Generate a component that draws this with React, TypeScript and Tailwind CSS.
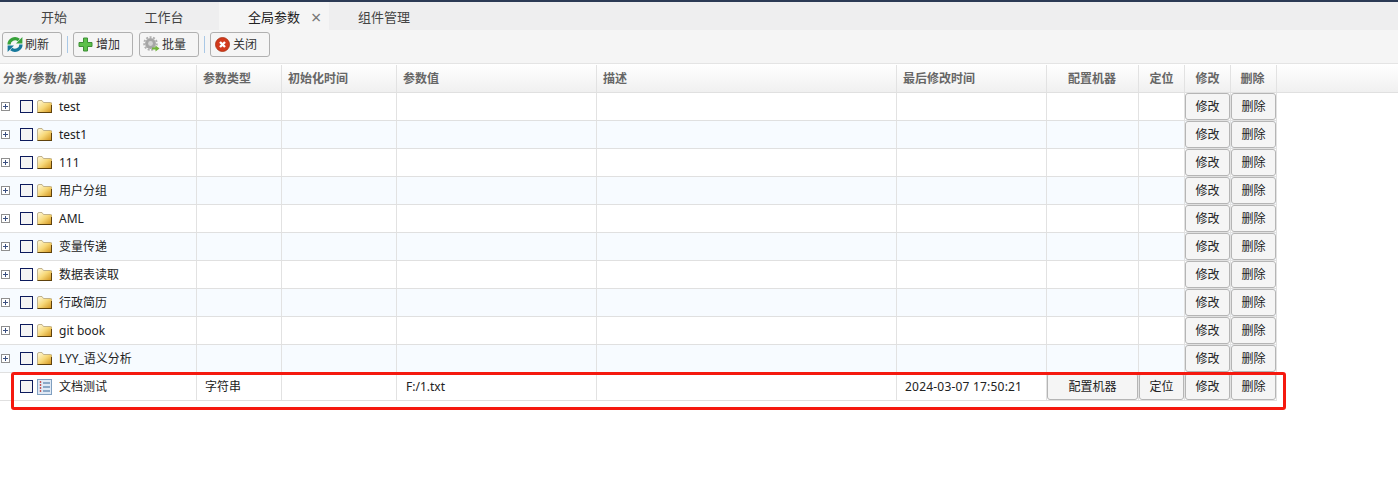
const font = { fontFamily: '"Noto Sans", "Noto Sans CJK SC", sans-serif' };

// column widths include the 1px right border
const cols = [
  { title: "分类/参数/机器", w: "w-[197px]", align: "pl-[3px] tracking-[0.25px]" },
  { title: "参数类型", w: "w-[85px]", align: "pl-[6px]" },
  { title: "初始化时间", w: "w-[115px]", align: "pl-[6px]" },
  { title: "参数值", w: "w-[200px]", align: "pl-[6px]" },
  { title: "描述", w: "w-[300px]", align: "pl-[6px]" },
  { title: "最后修改时间", w: "w-[150px]", align: "pl-[6px]" },
  { title: "配置机器", w: "w-[92px]", align: "justify-center pr-px" },
  { title: "定位", w: "w-[46px]", align: "justify-center" },
  { title: "修改", w: "w-[46px]", align: "justify-center" },
  { title: "删除", w: "w-[46px]", align: "justify-center pr-[2px]" },
];

const folders = ["test", "test1", "111", "用户分组", "AML", "变量传递", "数据表读取", "行政简历", "git book", "LYY_语义分析"];

function RefreshIcon() {
  return (
    <svg width="16" height="17" viewBox="0 0 16 17" fill="none">
      <path d="M2 8.500a6 6 0 0 1 9.800-4.500" stroke="#38a23a" strokeWidth="3.200" />
      <path d="M15.400 1v6.400H9z" fill="#38a23a" />
      <path d="M14 8.500a6 6 0 0 1-9.800 4.500" stroke="#17799c" strokeWidth="3.200" />
      <path d="M.6 16V9.600H7z" fill="#17799c" />
    </svg>
  );
}

function PlusIcon() {
  return (
    <svg width="15" height="15" viewBox="0 0 15 15">
      <path d="M5.500 1h4v4.500H14v4H9.500V14h-4V9.500H1v-4h4.500z" fill="#5cc04a" stroke="#3c8f34" />
    </svg>
  );
}

function GearIcon() {
  return (
    <svg width="17" height="17" viewBox="0 0 17 17">
      <circle cx="7.500" cy="7.500" r="5.400" fill="#a6a6a6" />
      <circle cx="7.500" cy="7.500" r="6.300" fill="none" stroke="#b0b0b0" strokeWidth="2" strokeDasharray="2 1.500" />
      <circle cx="7.500" cy="7.500" r="2.400" fill="#d4d4d4" />
      <path d="M9 11.500h3.500V9.500l4 3-4 3v-2H9z" fill="#72b53a" />
    </svg>
  );
}

function CloseIcon() {
  return (
    <svg width="15" height="15" viewBox="0 0 15 15">
      <circle cx="7.500" cy="7.500" r="7" fill="#d2391c" stroke="#a8300f" strokeWidth="0.800" />
      <path d="M5 5l5 5M10 5l-5 5" stroke="#fff" strokeWidth="2.400" />
    </svg>
  );
}

function FolderIcon() {
  return (
    <svg width="15" height="13" viewBox="0 0 15 13" className="shrink-0">
      <defs>
        <linearGradient id="folderFill" x1="0" y1="0" x2="1" y2="1">
          <stop offset="0" stopColor="#fffbe0" />
          <stop offset="0.500" stopColor="#f7d878" />
          <stop offset="1" stopColor="#cf8f18" />
        </linearGradient>
      </defs>
      <path d="M.5 2q0-1.500 1.500-1.500h3l1.500 2h7q1.500 0 1.500 1.500V12.500H.5z" fill="url(#folderFill)" stroke="#b3a27a" strokeWidth="0.800" />
      <path d="M.5 12.500h14.500M14.500 5v7.500" stroke="#5f420c" strokeWidth="1" />
    </svg>
  );
}

function DocIcon() {
  return (
    <svg width="15" height="16" viewBox="0 0 15 16" className="shrink-0">
      <rect x="0.500" y="0.500" width="14" height="15" fill="#dfe9f5" stroke="#7f9fc0" />
      <path d="M6 4h7M6 8h7M6 12h7" stroke="#6f93b8" strokeWidth="1.400" />
      <path d="M3.500 2v12" stroke="#c25555" strokeWidth="1.400" strokeDasharray="2 1" />
    </svg>
  );
}

function Expander() {
  return (
    <span className="w-[9px] h-[9px] border border-[#8f8f8f] bg-white flex items-center justify-center shrink-0">
      <span className="relative w-[5px] h-[5px] flex items-center justify-center">
        <span className="absolute w-[5px] h-px bg-[#3a4f80]" />
        <span className="absolute w-px h-[5px] bg-[#3a4f80]" />
      </span>
    </span>
  );
}

function Check() {
  return <span className="w-[13px] h-[13px] border border-[#0c1a5c] bg-[#f4f4f4] shrink-0" />;
}

function RowButton({ label, w }: { label: string; w: string }) {
  return (
    <button className={`${w} h-[27px] shrink-0 flex items-center justify-center rounded-[3px] border border-[#b5b5b5] bg-[#f5f5f5] text-xs text-[#222]`}>
      {label}
    </button>
  );
}

function ToolButton({ icon, label }: { icon: React.ReactNode; label: string }) {
  return (
    <button className="w-[60px] h-[25px] flex items-center pl-[3px] rounded-[3px] border border-[#b0b0b0] bg-[#f5f5f5] text-xs text-[#333]">
      <span className="w-[17px] mr-[2px] flex justify-center">{icon}</span>
      <span>{label}</span>
    </button>
  );
}

function Cell({ w, children, extra = "" }: { w: string; children?: React.ReactNode; extra?: string }) {
  return <div className={`${w} shrink-0 h-full flex items-center border-r border-[#e2e2e2] ${extra}`}>{children}</div>;
}

function FolderRow({ name, odd }: { name: string; odd: boolean }) {
  return (
    <div className={`flex h-[28px] w-[1277px] border-b border-[#e0e0e0] ${odd ? "bg-[#f7fbff]" : "bg-white"}`}>
      <Cell w="w-[197px]" extra="pl-px text-xs text-[#222]">
        <Expander />
        <span className="w-[10px]" />
        <Check />
        <span className="w-[4px]" />
        <FolderIcon />
        <span className="ml-[7px]">{name}</span>
      </Cell>
      <Cell w="w-[85px]" />
      <Cell w="w-[115px]" />
      <Cell w="w-[200px]" />
      <Cell w="w-[300px]" />
      <Cell w="w-[150px]" />
      <Cell w="w-[92px]" />
      <Cell w="w-[46px]" />
      <Cell w="w-[46px]">
        <RowButton label="修改" w="w-[45px]" />
      </Cell>
      <Cell w="w-[46px]">
        <RowButton label="删除" w="w-[45px]" />
      </Cell>
    </div>
  );
}

export default function App() {
  return (
    <div className="relative w-[1398px] h-[480px] bg-white overflow-hidden" style={font}>
      <div className="h-[2px] bg-[#2b3a55]" />

      {/* tabs */}
      <div className="flex h-[28px] bg-[#eeeeef] text-[13px] text-[#444]">
        <div className="w-[108px] pt-[3px] flex items-center justify-center">开始</div>
        <div className="w-[111px] pt-[3px] pl-px flex items-center justify-center">工作台</div>
        <div className="relative w-[110px] pt-[3px] flex items-center justify-center bg-[#f5f5f5] text-[#222]">
          全局参数
          <span className="absolute left-[92px] top-[5px] text-[18px] leading-[20px] text-[#777]">×</span>
        </div>
        <div className="w-[110px] pt-[3px] flex items-center justify-center">组件管理</div>
      </div>

      {/* toolbar */}
      <div className="flex items-center h-[34px] pl-[2px] pb-[4px] bg-[#f5f5f5] border-b border-[#e4e4e4]">
        <ToolButton icon={<RefreshIcon />} label="刷新" />
        <span className="w-px h-[17px] bg-[#a9c8e6] mx-[5px]" />
        <ToolButton icon={<PlusIcon />} label="增加" />
        <span className="w-[6px]" />
        <ToolButton icon={<GearIcon />} label="批量" />
        <span className="w-px h-[17px] bg-[#a9c8e6] mx-[5px]" />
        <ToolButton icon={<CloseIcon />} label="关闭" />
      </div>

      {/* header */}
      <div className="flex h-[29px] pt-px border-b border-[#e0e0e0] bg-gradient-to-b from-white to-[#f0f0f0] text-xs font-semibold text-[#666]">
        {cols.map((c) => (
          <div key={c.title} className={`${c.w} shrink-0 flex items-center border-r border-[#e2e2e2] ${c.align}`}>
            {c.title}
          </div>
        ))}
        <div className="flex-1" />
      </div>

      {/* rows */}
      {folders.map((name, i) => (
        <FolderRow key={name} name={name} odd={i % 2 === 1} />
      ))}

      <div className="flex h-[28px] w-[1277px] border-b border-[#e0e0e0] bg-white text-xs text-[#222]">
        <Cell w="w-[197px]" extra="pl-[20px]">
          <Check />
          <span className="w-[4px]" />
          <DocIcon />
          <span className="ml-[7px]">文档测试</span>
        </Cell>
        <Cell w="w-[85px]" extra="pl-[8px]">字符串</Cell>
        <Cell w="w-[115px]" />
        <Cell w="w-[200px]" extra="pl-[9px]">F:/1.txt</Cell>
        <Cell w="w-[300px]" />
        <Cell w="w-[150px]" extra="pl-[8px] tracking-[0.2px]">2024-03-07 17:50:21</Cell>
        <Cell w="w-[92px]">
          <RowButton label="配置机器" w="w-[91px]" />
        </Cell>
        <Cell w="w-[46px]">
          <RowButton label="定位" w="w-[45px]" />
        </Cell>
        <Cell w="w-[46px]">
          <RowButton label="修改" w="w-[45px]" />
        </Cell>
        <Cell w="w-[46px]">
          <RowButton label="删除" w="w-[45px]" />
        </Cell>
      </div>

      {/* red annotation drawn over the last row */}
      <div className="absolute left-[11px] top-[372px] w-[1275px] h-[38px] border-[3px] border-[#f5190f] rounded-[3px] pointer-events-none" />
    </div>
  );
}
